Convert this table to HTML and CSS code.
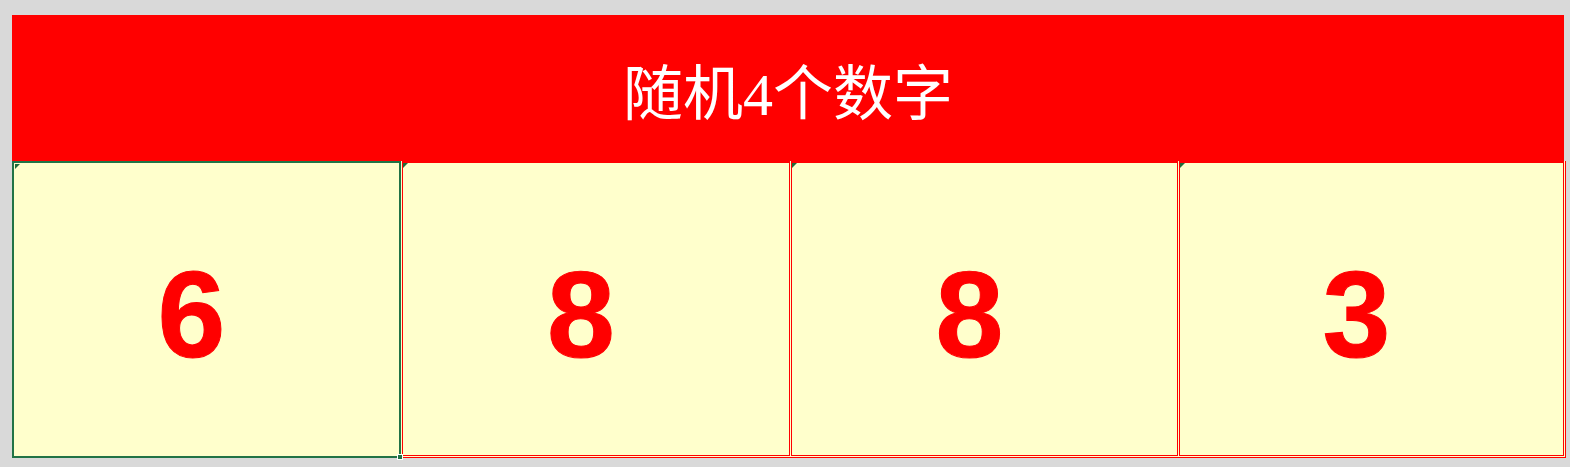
FILE: index.html
```html
<!DOCTYPE html>
<html lang="zh">
<head>
<meta charset="utf-8">
<link rel="stylesheet" href="styles.css">
</head>
<body>
<div class="sheet">
  <div class="header"><h1 class="title">随机4个数字</h1></div>
  <div class="row">
    <div class="cell selected"><span class="num">6</span><i class="handle"></i></div>
    <div class="cell"><span class="num">8</span></div>
    <div class="cell"><span class="num">8</span></div>
    <div class="cell"><span class="num">3</span></div>
  </div>
</div>
</body>
</html>
```
FILE: styles.css
```css
html, body {
  margin: 0;
  padding: 0;
  background: #d9d9d9;
}
body {
  padding: 15px 0 0 12px;
  width: 1570px;
  height: 467px;
  box-sizing: border-box;
  overflow: hidden;
}
.sheet {
  width: 1554px;
  display: flex;
  flex-direction: column;
}
.header {
  height: 146px;
  width: 1552px;
  background: #ff0000;
  display: flex;
  align-items: center;
  justify-content: center;
  padding-top: 14px;
  box-sizing: border-box;
}
.title {
  margin: 0;
  color: #ffffff;
  font-family: "Liberation Serif", "Noto Sans CJK SC", serif;
  font-weight: normal;
  font-size: 60px;
  line-height: 1;
}
.row {
  display: grid;
  grid-template-columns: 389px 389px 388px 386px;
  height: 297px;
  background: #ffffcc;
  border-right: 1px solid #ff0000;
  border-bottom: 1px solid #ff0000;
  padding: 0 1px 1px 0;
  box-sizing: border-box;
}
.cell {
  position: relative;
  display: flex;
  align-items: center;
  justify-content: center;
  padding-right: 30px;
  padding-top: 12px;
  box-sizing: border-box;
  background: #ffffcc;
  border: 1px solid #ff0000;
  border-top: 2px solid #ff0000;
  margin: 0 0 0 1px;
}
.cell::before {
  content: "";
  position: absolute;
  left: 0;
  top: 0;
  border-style: solid;
  border-width: 5px 5px 0 0;
  border-color: #1f6b3a transparent transparent transparent;
}
.cell.selected {
  border: 2px solid #217346;
  margin: 0 0 -2px 0;
  z-index: 1;
  padding-top: 10px;
}
.cell.selected::before {
  left: 1px;
  top: 1px;
}
.num {
  color: #ff0000;
  font-family: "Liberation Sans", Arial, sans-serif;
  font-weight: bold;
  font-size: 122px;
  line-height: 1;
  -webkit-text-stroke: 1px #ff0000;
}
.handle {
  position: absolute;
  right: -4px;
  bottom: -4px;
  width: 6px;
  height: 6px;
  background: #217346;
  border: 1px solid #ffffff;
  box-sizing: border-box;
}
```
